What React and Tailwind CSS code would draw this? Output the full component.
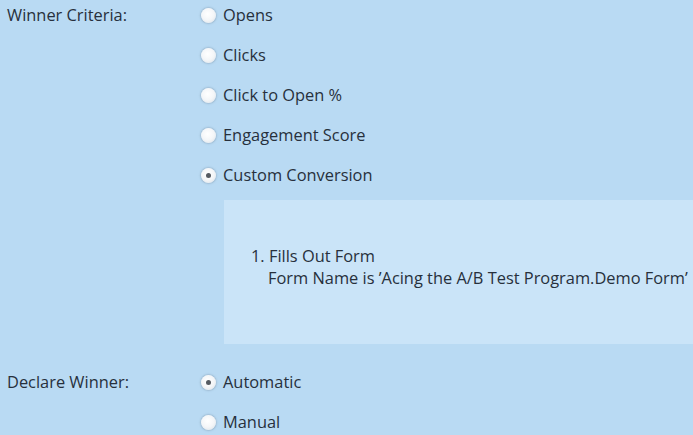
import React from "react";

function Radio({ checked }) {
  return (
    <span className="relative inline-flex h-[15px] w-[15px] shrink-0 items-center justify-center rounded-full bg-[radial-gradient(circle_at_45%_40%,#ffffff_0%,#f4f6f8_50%,#d8dfe6_100%)] shadow-[0_0_2px_0.5px_rgba(110,130,150,0.5)]">
      {checked && <span className="h-[5px] w-[5px] rounded-full bg-[#555b62]" />}
    </span>
  );
}

function Option({ label, checked }) {
  return (
    <div className="flex h-[24px] items-center gap-[7px]">
      <Radio checked={checked} />
      <span>{label}</span>
    </div>
  );
}

export default function App() {
  return (
    <div
      className="h-[435px] w-[693px] overflow-hidden bg-[#b9daf3] text-[16.4px] leading-[22px] text-[#27303c]"
      style={{ fontFamily: '"Open Sans", "Noto Sans", sans-serif' }}
    >
      <div className="flex pt-[3px]">
        <div className="flex h-[24px] w-[201px] shrink-0 items-center pl-[7px]">
          Winner Criteria:
        </div>
        <div className="flex min-w-0 flex-1 flex-col">
          <div className="flex flex-col gap-[16px]">
            <Option label="Opens" />
            <Option label="Clicks" />
            <Option label="Click to Open %" />
            <Option label="Engagement Score" />
            <Option label="Custom Conversion" checked />
          </div>
          <div className="mt-[13px] ml-[23px] h-[144px] w-[520px] bg-[#cae4f8] pt-[45px] pl-[27px]">
            <div>1. Fills Out Form</div>
            <div className="pl-[17px] whitespace-nowrap">
              Form Name is ’Acing the A/B Test Program.Demo Form’
            </div>
          </div>
        </div>
      </div>
      <div className="mt-[26px] flex">
        <div className="flex h-[24px] w-[201px] shrink-0 items-center pl-[7px]">
          Declare Winner:
        </div>
        <div className="flex flex-col gap-[16px]">
          <Option label="Automatic" checked />
          <Option label="Manual" />
        </div>
      </div>
    </div>
  );
}
